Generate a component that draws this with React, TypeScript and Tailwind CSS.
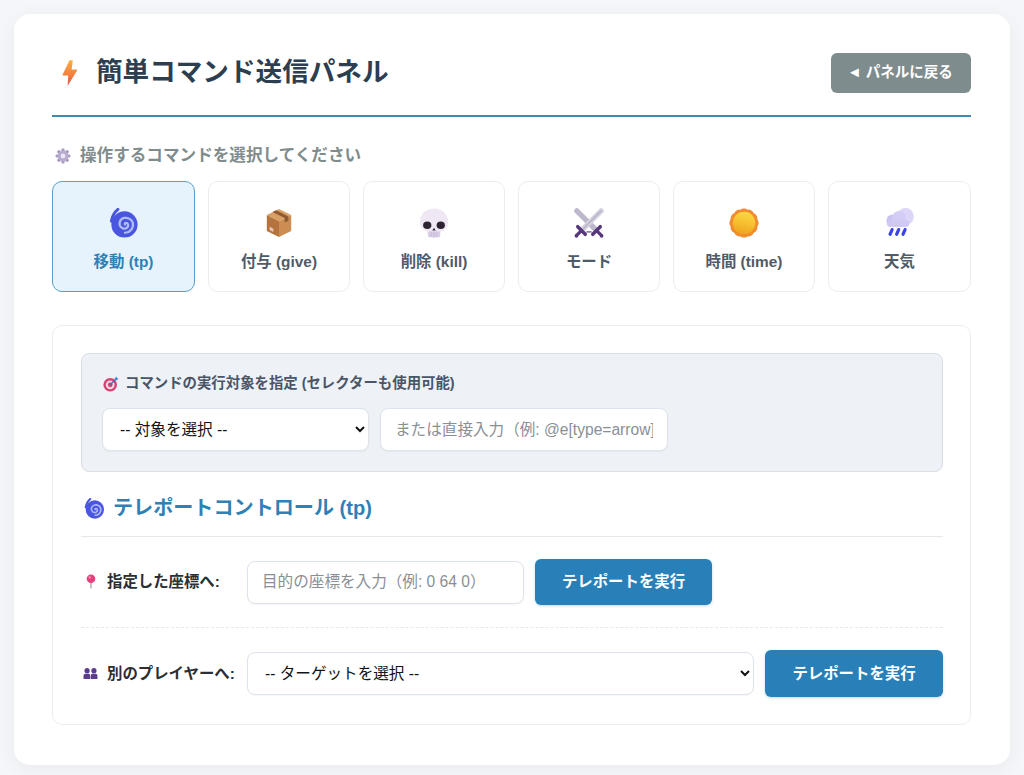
import React from "react";

const font = "font-['Liberation_Sans','Noto_Sans_CJK_JP',sans-serif]";

function Bolt({ className = "" }: { className?: string }) {
  return (
    <svg viewBox="0 0 16 26" className={className}>
      <defs>
        <linearGradient id="bolt" x1="0.5" y1="0" x2="0.5" y2="1">
          <stop offset="0" stopColor="#fbb040" />
          <stop offset="0.55" stopColor="#f5803e" />
          <stop offset="1" stopColor="#e8503f" />
        </linearGradient>
      </defs>
      <path d="M7.5 0.3 L10.8 0.3 L9.6 9.6 L14.6 9.6 Q15.6 9.8 15 10.8 L5.6 25.8 L6.2 15.4 L1.2 15.4 Q0.2 15.2 0.8 14.2 Z" fill="url(#bolt)" />
    </svg>
  );
}

function Gear({ className = "" }: { className?: string }) {
  return (
    <svg viewBox="0 0 16 16" className={className}>
      <g fill="#a99bc4">
        {[0, 45, 90, 135].map((a) => (
          <rect key={a} x="6.4" y="0.6" width="3.2" height="14.8" rx="1" transform={`rotate(${a} 8 8)`} />
        ))}
      </g>
      <circle cx="8" cy="8" r="5.2" fill="#b7abcf" />
      <circle cx="8" cy="8" r="2.4" fill="#ece8f3" />
    </svg>
  );
}

function Swirl({ className = "" }: { className?: string }) {
  return (
    <svg viewBox="0 0 32 32" className={className}>
      <circle cx="16.5" cy="17.5" r="14" fill="#4a55e0" />
      <path d="M9.5 1.5 Q4 6 2.6 14" stroke="#4a55e0" strokeWidth="3.2" fill="none" strokeLinecap="round" />
      <path
        d="M17 17.6 C16 15.8 19.8 15 20.4 17.8 C21 21.4 16.4 23.2 13.4 21 C9.6 18 11 11.6 16.4 10.6 C22.4 9.6 26.8 14.4 25.4 19.8 C24.4 23.6 21 26.2 17 26.4"
        stroke="#aebcf8"
        strokeWidth="2.4"
        fill="none"
        strokeLinecap="round"
      />
    </svg>
  );
}

function Box({ className = "" }: { className?: string }) {
  return (
    <svg viewBox="0 0 32 32" className={className}>
      <path d="M16 1 L29 7.5 L16 14 L3 7.5 Z" fill="#d9a066" />
      <path d="M3 7.5 L16 14 L16 31 L3 24.5 Z" fill="#b5733d" />
      <path d="M29 7.5 L16 14 L16 31 L29 24.5 Z" fill="#cd8d52" />
      <path d="M9 4.2 L22 10.7 L22 15.5 L26 13.5 L26 9 L13 2.5 Z" fill="#8f5a32" />
      <path d="M6 20 L10 22 L10 25.5 L6 23.5 Z" fill="#e6c9b8" />
    </svg>
  );
}

function Skull({ className = "" }: { className?: string }) {
  return (
    <svg viewBox="0 0 32 32" className={className}>
      <path d="M9 21 L23 21 L22.5 30 Q21 32 19 31 Q16 32.5 13 31 Q11 32 9.5 30 Z" fill="#d9cfe8" />
      <path d="M16 0.5 C7.5 0.5 1 6.5 1 15 C1 20 4 24 9 25 L23 25 C28 24 31 20 31 15 C31 6.5 24.5 0.5 16 0.5 Z" fill="#efe7f3" />
      <ellipse cx="8.8" cy="18.4" rx="4.4" ry="4" fill="#2c2530" />
      <ellipse cx="23.2" cy="18.4" rx="4.4" ry="4" fill="#2c2530" />
      <path d="M16 21 L17.8 24 L14.2 24 Z" fill="#2c2530" />
      <path d="M13 25 V31 M16 25 V31.5 M19 25 V31" stroke="#bfb2d4" strokeWidth="0.8" />
    </svg>
  );
}

function Swords({ className = "" }: { className?: string }) {
  return (
    <svg viewBox="0 0 32 32" className={className}>
      <path d="M3 3 L22 22" stroke="#bdb8cb" strokeWidth="5.6" strokeLinecap="round" />
      <path d="M29 3 L10 22" stroke="#d5d1de" strokeWidth="5.6" strokeLinecap="round" />
      <path d="M29 3 L10 22" stroke="#b2adc2" strokeWidth="1.4" />
      <g stroke="#56397c" strokeLinecap="round" fill="none">
        <path d="M4 20 L12 28" strokeWidth="3.8" />
        <path d="M28 20 L20 28" strokeWidth="3.8" />
        <path d="M8 24 L2.8 29.2" strokeWidth="3.4" />
        <path d="M24 24 L29.2 29.2" strokeWidth="3.4" />
        <path d="M14 25.5 L18 25.5" strokeWidth="2" stroke="#8f80a8" />
      </g>
      <circle cx="2.6" cy="29.6" r="2" fill="#56397c" />
      <circle cx="29.4" cy="29.6" r="2" fill="#56397c" />
    </svg>
  );
}

function Sun({ className = "" }: { className?: string }) {
  return (
    <svg viewBox="0 0 32 32" className={className}>
      <defs>
        <linearGradient id="sun" x1="0.6" y1="0.1" x2="0.4" y2="1">
          <stop offset="0" stopColor="#fcd53f" />
          <stop offset="1" stopColor="#f0a41f" />
        </linearGradient>
      </defs>
      <g fill="#f28a2e">
        {[0, 30, 60, 90, 120, 150].map((a) => (
          <rect key={a} x="11" y="0.5" width="10" height="31" rx="4.5" transform={`rotate(${a} 16 16)`} />
        ))}
      </g>
      <circle cx="16" cy="16" r="12" fill="url(#sun)" />
    </svg>
  );
}

function Rain({ className = "" }: { className?: string }) {
  return (
    <svg viewBox="0 0 32 32" className={className}>
      <circle cx="21.8" cy="9" r="9" fill="#ddd6f8" />
      <circle cx="8" cy="13.5" r="6.6" fill="#c9c4f2" />
      <circle cx="15" cy="10.5" r="7.4" fill="#d3cdf5" />
      <rect x="2" y="13" width="24" height="7.2" rx="3.6" fill="#cfc9f4" />
      <g stroke="#3b45e8" strokeWidth="3.4" strokeLinecap="round">
        <path d="M7.6 23 L5.4 28" />
        <path d="M14.6 23 L12.4 28" />
        <path d="M21.4 23 L19.2 28" />
      </g>
    </svg>
  );
}

function Target({ className = "" }: { className?: string }) {
  return (
    <svg viewBox="0 0 16 16" className={className}>
      <circle cx="7.2" cy="8.8" r="6.8" fill="#d83f72" />
      <circle cx="7.2" cy="8.8" r="4.4" fill="#f5d9e4" />
      <circle cx="7.2" cy="8.8" r="2.4" fill="#d83f72" />
      <path d="M7.2 8.8 L13 3" stroke="#3f6fb5" strokeWidth="1.3" />
      <path d="M11.5 2.5 L13.5 0.5 L14 2.2 L15.7 2.6 L13.6 4.6 Z" fill="#3f8fd6" />
    </svg>
  );
}

function Pin({ className = "" }: { className?: string }) {
  return (
    <svg viewBox="0 0 12 16" className={className}>
      <rect x="5.2" y="7" width="1.6" height="8.5" rx="0.8" fill="#b3a6b5" />
      <circle cx="6" cy="5" r="4.6" fill="#ea3f7b" />
      <circle cx="4.6" cy="3.6" r="1.2" fill="#f7a3c0" />
    </svg>
  );
}

function People({ className = "" }: { className?: string }) {
  return (
    <svg viewBox="0 0 16 14" className={className}>
      <g fill="#5c3a8c">
        <circle cx="4.3" cy="4" r="2.8" />
        <circle cx="11.7" cy="4" r="2.8" />
        <path d="M0.5 13 V9.5 Q0.5 7.4 2.6 7.4 H6 Q7.7 7.4 7.7 9.5 V13 Z" />
        <path d="M8.3 13 V9.5 Q8.3 7.4 10 7.4 H13.4 Q15.5 7.4 15.5 9.5 V13 Z" />
      </g>
    </svg>
  );
}

const commands = [
  { label: "移動 (tp)", Icon: Swirl, active: true },
  { label: "付与 (give)", Icon: Box },
  { label: "削除 (kill)", Icon: Skull },
  { label: "モード", Icon: Swords },
  { label: "時間 (time)", Icon: Sun },
  { label: "天気", Icon: Rain },
];

const fieldCls =
  "h-[43px] bg-white border border-[#dde3ea] rounded-lg text-[15.6px] text-[#111418] outline-none shadow-[0_1px_2px_rgba(0,0,0,0.04)]";

function RunButton({ className = "" }: { className?: string }) {
  return (
    <button
      type="button"
      className={`w-[177px] h-[46px] shrink-0 rounded-md bg-[#2980b9] text-white text-[15.4px] font-bold shadow-[0_1px_3px_rgba(41,128,185,0.3)] ${className}`}
    >
      テレポートを実行
    </button>
  );
}

export default function App() {
  return (
    <div className={`min-h-[775px] bg-[#f4f6f9] p-[14px] ${font}`}>
      <div className="h-[751px] bg-white rounded-2xl shadow-[0_4px_20px_rgba(0,0,0,0.05)] pl-[38px] pr-[39px] pt-[39px]">
        <div className="h-[64px] flex items-start justify-between border-b-2 border-[#3f8bb0]">
          <h1 className="flex items-center h-[40px] text-[26.6px] font-bold text-[#2c3e50]">
            <Bolt className="w-[16px] h-[26px] ml-[10px] mr-[18px]" />
            簡単コマンド送信パネル
          </h1>
          <button
            type="button"
            className="w-[140px] h-[40px] pr-[2px] rounded-md bg-[#7f8c8d] text-white text-[14.5px] font-bold"
          >
            ◄ パネルに戻る
          </button>
        </div>

        <div className="mt-[29px] flex items-center h-[20px] text-[16.6px] font-bold text-[#7f8c8d]">
          <Gear className="w-[16px] h-[16px] ml-[3px] mr-[9px]" />
          操作するコマンドを選択してください
        </div>

        <div className="mt-[15px] grid grid-cols-[143px_142px_142px_142px_142px_143px] gap-[13px]">
          {commands.map(({ label, Icon, active }) => (
            <button
              key={label}
              type="button"
              className={`h-[111px] rounded-[10px] border flex flex-col items-center text-[15.4px] font-bold ${
                active
                  ? "bg-[#e6f3fd] border-[#5b9fc9] text-[#2f80b5]"
                  : "bg-white border-[#e9edf2] text-[#4f5b69]"
              }`}
            >
              <Icon className="w-[30px] h-[30px] mt-[26px]" />
              <span className="mt-[12px]">{label}</span>
            </button>
          ))}
        </div>

        <div className="mt-[33px] h-[400px] rounded-[10px] border border-[#e9edf2] pl-[28px] pr-[27px] pt-[27px]">
          <div className="h-[119px] rounded-lg bg-[#eef1f6] border border-[#d9dfe7] px-[20px] pt-[20px]">
            <div className="flex items-center h-[20px] text-[14.4px] font-bold text-[#4a5568]">
              <Target className="w-[16px] h-[16px] ml-[1px] mr-[6px]" />
              コマンドの実行対象を指定 (セレクターも使用可能)
            </div>
            <div className="mt-[14px] flex items-start gap-[11px]">
              <select className={`${fieldCls} w-[267px] pl-[13px] pr-[3px]`} defaultValue="">
                <option value="">-- 対象を選択 --</option>
              </select>
              <input
                className={`${fieldCls} w-[288px] h-[42px] px-[14px] placeholder:text-[#8a8f96]`}
                placeholder="または直接入力（例: @e[type=arrow])"
              />
            </div>
          </div>

          <h2 className="mt-[20px] h-[45px] pb-[12px] flex items-center border-b border-[#e5e8ec] text-[20.1px] font-bold text-[#2f80b5]">
            <Swirl className="w-[21px] h-[21px] ml-[3px] mr-[8px]" />
            テレポートコントロール (tp)
          </h2>

          <div className="mt-[22px] flex items-center gap-[11px] pb-[22px] border-b border-dashed border-[#e5e8ec]">
            <label className="w-[155px] flex items-center text-[15.4px] font-bold text-[#2b2f33]">
              <Pin className="w-[12px] h-[15px] ml-[4px] mr-[10px]" />
              指定した座標へ:
            </label>
            <input
              className={`${fieldCls} w-[277px] h-[42px] px-[14px] placeholder:text-[#8a8f96]`}
              placeholder="目的の座標を入力（例: 0 64 0）"
            />
            <RunButton />
          </div>

          <div className="mt-[22px] flex items-center gap-[11px]">
            <label className="w-[155px] flex items-center text-[15.4px] font-bold text-[#2b2f33]">
              <People className="w-[15px] h-[13px] ml-[2px] mr-[9px]" />
              別のプレイヤーへ:
            </label>
            <select className={`${fieldCls} w-[507px] pl-[13px] pr-[3px]`} defaultValue="">
              <option value="">-- ターゲットを選択 --</option>
            </select>
            <RunButton className="w-[178px] h-[47px]" />
          </div>
        </div>
      </div>
    </div>
  );
}
